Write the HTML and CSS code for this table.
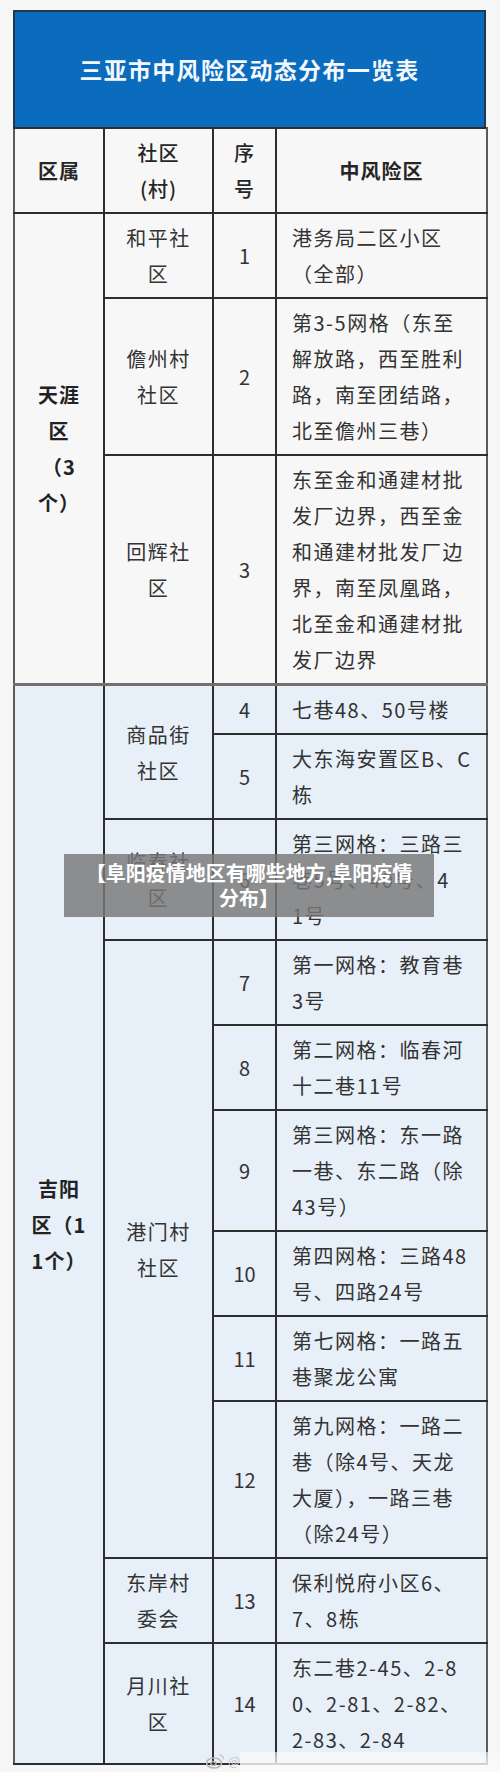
FILE: index.html
```html
<!DOCTYPE html>
<html lang="zh-CN">
<head>
<meta charset="utf-8">
<title>三亚市中风险区动态分布一览表</title>
<link rel="stylesheet" href="styles.css">
</head>
<body>
<div class="page">
  <div class="sheet">
    <div class="title">三亚市中风险区动态分布一览表</div>
    <table class="grid">
      <colgroup>
        <col class="c1"><col class="c2"><col class="c3"><col class="c4">
      </colgroup>
      <thead>
        <tr class="head">
          <th>区属</th>
          <th class="light">社区<br>(村)</th>
          <th class="light">序<br>号</th>
          <th>中风险区</th>
        </tr>
      </thead>
      <tbody class="sec1">
        <tr>
          <td rowspan="3" class="dist">天涯<br>区<br>（3<br>个）</td>
          <td class="comm">和平社<br>区</td>
          <td class="num">1</td>
          <td class="area">港务局二区小区<br>（全部）</td>
        </tr>
        <tr>
          <td class="comm">儋州村<br>社区</td>
          <td class="num">2</td>
          <td class="area">第3-5网格（东至<br>解放路，西至胜利<br>路，南至团结路，<br>北至儋州三巷）</td>
        </tr>
        <tr>
          <td class="comm">回辉社<br>区</td>
          <td class="num">3</td>
          <td class="area">东至金和通建材批<br>发厂边界，西至金<br>和通建材批发厂边<br>界，南至凤凰路，<br>北至金和通建材批<br>发厂边界</td>
        </tr>
      </tbody>
      <tbody class="sec2">
        <tr class="first">
          <td rowspan="11" class="dist">吉阳<br>区（1<br>1个）</td>
          <td rowspan="2" class="comm">商品街<br>社区</td>
          <td class="num">4</td>
          <td class="area">七巷48、50号楼</td>
        </tr>
        <tr>
          <td class="num">5</td>
          <td class="area">大东海安置区B、C<br>栋</td>
        </tr>
        <tr>
          <td class="comm">临春社<br>区</td>
          <td class="num">6</td>
          <td class="area">第三网格：三路三<br>巷5号、40号、4<br>1号</td>
        </tr>
        <tr>
          <td rowspan="6" class="comm">港门村<br>社区</td>
          <td class="num">7</td>
          <td class="area">第一网格：教育巷<br>3号</td>
        </tr>
        <tr>
          <td class="num">8</td>
          <td class="area">第二网格：临春河<br>十二巷11号</td>
        </tr>
        <tr>
          <td class="num">9</td>
          <td class="area">第三网格：东一路<br>一巷、东二路（除<br>43号）</td>
        </tr>
        <tr>
          <td class="num">10</td>
          <td class="area">第四网格：三路48<br>号、四路24号</td>
        </tr>
        <tr>
          <td class="num">11</td>
          <td class="area">第七网格：一路五<br>巷聚龙公寓</td>
        </tr>
        <tr>
          <td class="num">12</td>
          <td class="area">第九网格：一路二<br>巷（除4号、天龙<br>大厦），一路三巷<br>（除24号）</td>
        </tr>
        <tr>
          <td class="comm">东岸村<br>委会</td>
          <td class="num">13</td>
          <td class="area">保利悦府小区6、<br>7、8栋</td>
        </tr>
        <tr>
          <td class="comm">月川社<br>区</td>
          <td class="num">14</td>
          <td class="area">东二巷2-45、2-8<br>0、2-81、2-82、<br>2-83、2-84</td>
        </tr>
      </tbody>
    </table>
    <div class="banner">【阜阳疫情地区有哪些地方,阜阳疫情分布】</div>
    <div class="fade"></div>
    <div class="mark">
      <svg width="20" height="16" viewBox="0 0 20 16" aria-hidden="true">
        <ellipse cx="8" cy="10" rx="7.5" ry="5" fill="none" stroke="#b9b9b9" stroke-width="1.6"/>
        <ellipse cx="7.5" cy="10.5" rx="2.6" ry="2" fill="none" stroke="#b9b9b9" stroke-width="1.3"/>
        <path d="M13 2.2a4 4 0 0 1 4.6 4.2" fill="none" stroke="#c4c4c4" stroke-width="1.3"/>
      </svg>
      <span class="at">@</span>
    </div>
  </div>
</div>
</body>
</html>
```
FILE: styles.css
```css
html, body {
  margin: 0;
  padding: 0;
  background: #f6f6f6;
}
body {
  font-family: "Noto Sans CJK SC", "Noto Sans", sans-serif;
  color: #333;
}
.page {
  padding: 10px 0 0 13px;
  height: 1762px;
  overflow: hidden;
}
.sheet {
  width: 473px;
  position: relative;
}
.title {
  box-sizing: border-box;
  height: 117px;
  background: #0b6bbd;
  border: 2px solid #23384f;
  border-bottom: none;
  color: #f4f8fc;
  font-weight: 700;
  font-size: 23px;
  letter-spacing: 1.3px;
  display: flex;
  align-items: center;
  justify-content: center;
  padding-bottom: 1px;
}
.grid {
  width: 473px;
  border-collapse: collapse;
  table-layout: fixed;
}
.c1 { width: 90px; }
.c2 { width: 109px; }
.c3 { width: 63px; }
.c4 { width: 211px; }
.grid th,
.grid td {
  border: 2px solid #2e2e2e;
  padding: 6px 0 5px;
  line-height: 36px;
  font-size: 20px;
  text-align: center;
  vertical-align: middle;
  letter-spacing: 1.5px;
}
.grid th {
  font-weight: 700;
  color: #262626;
  background: #f7f7f7;
  letter-spacing: 1px;
}
.grid th.light {
  font-weight: 500;
}
.grid tr > :first-child {
  border-left-color: #5a5a5a;
}
.grid tr > :last-child {
  border-right-color: #5a5a5a;
}
.sec1 td {
  background: #f7f7f7;
}
.sec2 td {
  background: #e7eff8;
}
.sec2 tr.first td {
  border-top: 3px solid #707070;
}
.grid td.dist {
  font-weight: 700;
  color: #222;
  letter-spacing: 1px;
}
.grid td.num {
  letter-spacing: 0;
  font-weight: 400;
}
.grid td.area {
  text-align: left;
  padding-left: 15px;
}
.banner {
  position: absolute;
  left: 51px;
  top: 844px;
  width: 370px;
  height: 63px;
  box-sizing: border-box;
  padding: 6px 16px 0;
  background: rgba(120, 120, 120, 0.82);
  color: #fff;
  font-weight: 700;
  font-size: 20px;
  line-height: 25px;
  text-align: center;
}
.fade {
  position: absolute;
  left: 227px;
  top: 1742px;
  width: 260px;
  height: 20px;
  background: linear-gradient(to bottom, rgba(250, 250, 250, 0.6), rgba(250, 250, 250, 0.95));
}
.mark {
  position: absolute;
  left: 193px;
  top: 1743px;
  display: flex;
  align-items: center;
  gap: 2px;
}
.at {
  font-size: 13px;
  color: #c6c6c6;
  line-height: 14px;
}
```
